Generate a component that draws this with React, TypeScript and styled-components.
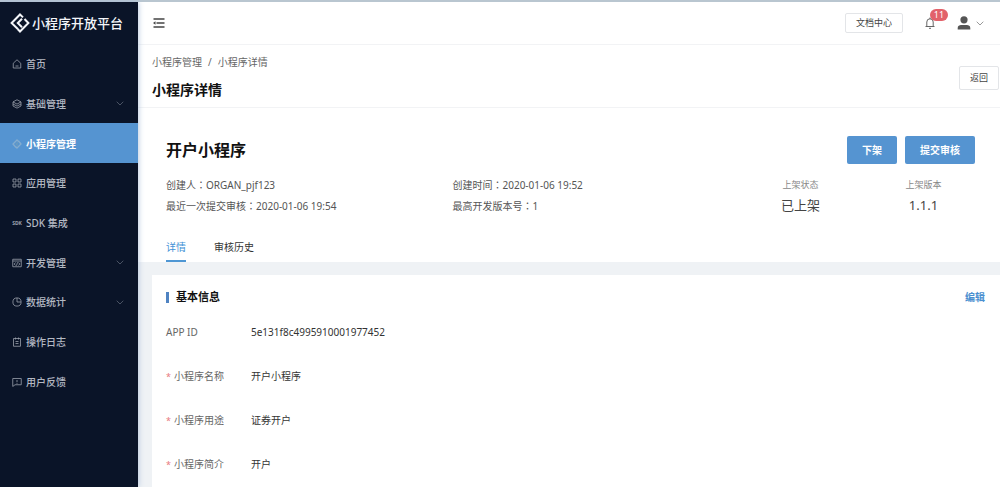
import React from "react";
import styled, { createGlobalStyle } from "styled-components";

const GlobalStyle = createGlobalStyle`
  *, *::before, *::after { box-sizing: border-box; }
  body {
    margin: 0;
    background: #eff2f5;
    color: #444;
    font-family: "Noto Sans", "Noto Sans CJK SC", sans-serif;
    font-size: 10px;
    line-height: 20px;
  }
  button { font: inherit; cursor: pointer; }
  a { color: inherit; text-decoration: none; }
  h1, h2, h3, p, dl, dd, ol, ul { margin: 0; padding: 0; }
`;

const Page = styled.div`
  display: flex;
  min-height: 100vh;
  border-top: 2px solid #b9c6d0;
`;

const Sidebar = styled.aside`
  flex: 0 0 138px;
  background: #0a1428;
  color: #b4b9c3;
  box-shadow: 0 0 6px #a9bdd8;
  z-index: 1;
`;

const Brand = styled.a`
  display: flex;
  align-items: center;
  gap: 2px;
  height: 42px;
  padding-left: 10px;
  color: #f4f6fa;
  font-size: 13px;
  font-weight: 500;
  white-space: nowrap;
`;

const Menu = styled.nav`
  display: grid;
  grid-auto-rows: 1fr;
  height: 357px;
`;

const MenuItem = styled.a<{ $active?: boolean }>`
  display: flex;
  align-items: center;
  padding: 1px 14px 0 11px;
  background: ${(p) => (p.$active ? "#5594d1" : "transparent")};
  color: ${(p) => (p.$active ? "#fff" : "inherit")};
  font-weight: ${(p) => (p.$active ? 700 : 500)};
`;

const MenuIcon = styled.span`
  display: flex;
  justify-content: center;
  width: 12px;
  margin-right: 3px;
  opacity: 0.85;
`;

const MenuText = styled.span`
  flex: 1;
`;

const Main = styled.main`
  flex: 1;
  min-width: 0;
  display: flex;
  flex-direction: column;
`;

const Topbar = styled.header`
  display: flex;
  align-items: center;
  height: 43px;
  padding: 0 16px 0 15px;
  background: #fff;
  border-bottom: 1px solid #f2f3f5;
`;

const IconButton = styled.button`
  position: relative;
  display: flex;
  align-items: center;
  gap: 5px;
  padding: 0;
  border: 0;
  background: none;
  color: #555;
`;

const Tools = styled.div`
  display: flex;
  align-items: center;
  margin-left: auto;
  gap: 22px;
`;

const PlainButton = styled.button<{ $tall?: boolean }>`
  height: ${(p) => (p.$tall ? 24 : 20)}px;
  padding: 0 10px;
  border: 1px solid #e3e5e8;
  border-radius: 2px;
  background: #fff;
  color: #444;
  font-size: 9px;
  line-height: 16px;
`;

const Badge = styled.span`
  position: absolute;
  top: -8px;
  left: 5px;
  width: 18px;
  border-radius: 6px;
  background: #e2626a;
  color: #fff;
  font-size: 9px;
  line-height: 12px;
  text-align: center;
`;

const PageHead = styled.section`
  display: flex;
  justify-content: space-between;
  height: 63px;
  padding: 7px 1px 0 14px;
  background: #fff;
  border-bottom: 1px solid #f2f3f5;
`;

const Crumbs = styled.ol`
  display: flex;
  gap: 6px;
  list-style: none;
  color: #666;
`;

const PageTitle = styled.h1`
  margin-top: 8px;
  color: #111;
  font-size: 14px;
  line-height: 20px;
`;

const BackSlot = styled.div`
  padding-top: 14px;
`;

const Summary = styled.section`
  padding: 28px 25px 0 28px;
  background: #fff;
`;

const SummaryHead = styled.div`
  display: flex;
  align-items: center;
  justify-content: space-between;
`;

const AppName = styled.h2`
  padding-top: 1px;
  color: #111;
  font-size: 16px;
  line-height: 27px;
`;

const Actions = styled.div`
  display: flex;
  gap: 8px;
`;

const PrimaryButton = styled.button`
  height: 28px;
  padding: 0 15px;
  border: 0;
  border-radius: 2px;
  background: #5594d1;
  color: #fff;
  font-weight: 700;
`;

const SummaryBody = styled.div`
  display: flex;
  padding: 11px 32px 0 0;
`;

const Meta = styled.div`
  flex: 1;
  display: grid;
  grid-template-columns: 1fr 1fr;
  align-content: start;
  row-gap: 1px;
  margin-right: 42px;
  color: #555;
`;

const Colon = styled.span`
  font-family: "Noto Sans CJK TC", sans-serif;
`;

const Stats = styled.dl`
  display: flex;
  gap: 84px;
`;

const Stat = styled.div`
  min-width: 39px;
  text-align: center;
`;

const StatLabel = styled.dt`
  color: #888;
  font-size: 9px;
  white-space: nowrap;
`;

const StatValue = styled.dd`
  color: #444;
  font-size: 13px;
`;

const Tabs = styled.div`
  display: flex;
  gap: 28px;
  margin-top: 18px;
`;

const Tab = styled.button<{ $active?: boolean }>`
  height: 28px;
  padding: 0;
  border: 0;
  border-bottom: 2px solid ${(p) => (p.$active ? "#4f97d4" : "transparent")};
  background: none;
  color: ${(p) => (p.$active ? "#3f91d6" : "#333")};
`;

const Card = styled.section`
  flex: 1;
  margin: 13px 0 0 14px;
  padding: 12px 15px 0 14px;
  background: #fff;
`;

const CardHead = styled.div`
  display: flex;
  align-items: center;
  justify-content: space-between;
`;

const CardTitle = styled.h3`
  display: flex;
  align-items: center;
  gap: 7px;
  color: #111;
  font-size: 11px;
  line-height: 20px;

  &::before {
    content: "";
    width: 3px;
    height: 11px;
    background: #4f83c2;
  }
`;

const EditLink = styled.a`
  color: #4a8fd0;
  font-weight: 700;
`;

const Fields = styled.dl`
  padding-top: 3px;
`;

const Field = styled.div`
  display: flex;
  align-items: center;
  height: 44px;
`;

const FieldLabel = styled.dt<{ $required?: boolean }>`
  flex: 0 0 85px;
  color: #666;

  &::before {
    content: ${(p) => (p.$required ? '"*"' : "none")};
    margin-right: 3px;
    color: #e8777d;
    font-size: 9px;
  }
`;

const FieldValue = styled.dd`
  color: #333;
`;

const Svg = ({ size = 10, children }: { size?: number; children: React.ReactNode }) => (
  <svg width={size} height={size} viewBox="0 0 20 20" fill="none" stroke="currentColor" strokeWidth="1.6" aria-hidden="true">
    {children}
  </svg>
);

const Chevron = ({ color }: { color: string }) => (
  <svg width="8" height="5" viewBox="0 0 8 5" fill="none" stroke={color} aria-hidden="true">
    <path d="M.7.7 4 4 7.3.7" />
  </svg>
);

const Logo = () => (
  <svg width="20" height="20" viewBox="0 0 20 20" fill="none" stroke="currentColor" strokeWidth="2" aria-hidden="true">
    <path d="M7.8 16 1.600 10 10 1.500l3 2.900" />
    <path d="M14.500 6 18.400 10 10 18.500 7.600 16" />
    <path d="M12 5.800 7.800 10l4.200 4.200" />
  </svg>
);

const icons = {
  home: (
    <Svg>
      <path d="M2.500 8.500 10 1.500l7.500 7V18h-15zM7 14h6" />
    </Svg>
  ),
  layers: (
    <Svg>
      <path d="m10 1.500 8 4.300-8 4.400-8-4.400zM2 10l8 4.300 8-4.300M2 14l8 4.300 8-4.300M2 6v8M18 6v8" />
    </Svg>
  ),
  program: (
    <svg width="10" height="10" viewBox="0 0 20 20" fill="none" stroke="#8db1cf" strokeWidth="2.6" aria-hidden="true">
      <path d="M8 17 2 10l8-8 3 3M13 4l5 6-8 8-3-3" />
      <path d="M12 6.500 8.500 10l3.500 3.500" stroke="#6d9dbd" />
    </svg>
  ),
  apps: (
    <Svg>
      <path d="M2 2h6v6H2zM12 2h6v6h-6zM2 12h6v6H2zM12 12h6v6h-6z" />
    </Svg>
  ),
  code: (
    <Svg>
      <path d="M1.500 2.500h17v15h-17zM1.500 6h17M7 9l-2.500 3L7 15M13 9l2.500 3-2.500 3M11 8.500 9 15.500" />
    </Svg>
  ),
  pie: (
    <Svg>
      <circle cx="10" cy="10" r="8.200" />
      <path d="M10 2v8h8" />
    </Svg>
  ),
  log: (
    <Svg>
      <path d="M3 3h14v15.500H3zM7 1v4M13 1v4M7 9h6M7 13h6" />
    </Svg>
  ),
  feedback: (
    <Svg>
      <path d="M1.500 3h17v12.500H6L1.500 19zM10 6v4M10 11.500v2" />
    </Svg>
  ),
};

const SdkMark = styled.span`
  font-size: 5px;
  font-weight: 700;
  line-height: 8px;
`;

const menu = [
  { text: "首页", icon: icons.home },
  { text: "基础管理", icon: icons.layers, sub: true },
  { text: "小程序管理", icon: icons.program, active: true },
  { text: "应用管理", icon: icons.apps },
  { text: "SDK 集成", icon: <SdkMark>SDK</SdkMark> },
  { text: "开发管理", icon: icons.code, sub: true },
  { text: "数据统计", icon: icons.pie, sub: true },
  { text: "操作日志", icon: icons.log },
  { text: "用户反馈", icon: icons.feedback },
];

const meta = [
  ["创建人", "ORGAN_pjf123"],
  ["创建时间", "2020-01-06 19:52"],
  ["最近一次提交审核", "2020-01-06 19:54"],
  ["最高开发版本号", "1"],
];

const fields = [
  { label: "APP ID", value: "5e131f8c4995910001977452" },
  { label: "小程序名称", value: "开户小程序", required: true },
  { label: "小程序用途", value: "证券开户", required: true },
  { label: "小程序简介", value: "开户", required: true },
];

export default function App() {
  return (
    <>
      <GlobalStyle />
      <Page lang="zh-CN">
        <Sidebar>
          <Brand href="#">
            <Logo />
            小程序开放平台
          </Brand>
          <Menu>
            {menu.map((m) => (
              <MenuItem key={m.text} href="#" $active={m.active} aria-current={m.active ? "page" : undefined}>
                <MenuIcon>{m.icon}</MenuIcon>
                <MenuText>{m.text}</MenuText>
                {m.sub && <Chevron color="#4a5364" />}
              </MenuItem>
            ))}
          </Menu>
        </Sidebar>
        <Main>
          <Topbar>
            <IconButton aria-label="收起菜单">
              <svg width="12" height="10" viewBox="0 0 12 10" fill="none" stroke="#444" strokeWidth="1.4" aria-hidden="true">
                <path d="M.5 1h11M3.500 5h8M.5 9h11" />
                <path d="M0 5 2.500 3.300v3.400z" fill="#444" stroke="none" />
              </svg>
            </IconButton>
            <Tools>
              <PlainButton>文档中心</PlainButton>
              <IconButton aria-label="通知">
                <svg width="10" height="12" viewBox="0 0 10 12" fill="none" stroke="#666" aria-hidden="true">
                  <path d="M.5 9.500h9M1.800 9.500V5a3.200 3.200 0 0 1 6.400 0v4.500M4 11.300h2M5 .5v1.500" />
                </svg>
                <Badge>11</Badge>
              </IconButton>
              <IconButton aria-label="账户">
                <svg width="14" height="14" viewBox="0 0 14 14" fill="#555" aria-hidden="true">
                  <circle cx="7" cy="3.800" r="3.600" />
                  <path d="M.7 13.500v-1.500C.7 9.800 2.500 9 4 9h6c1.500 0 3.300.8 3.300 3v1.500z" />
                </svg>
                <Chevron color="#999" />
              </IconButton>
            </Tools>
          </Topbar>
          <PageHead>
            <div>
              <Crumbs>
                <li>
                  <a href="#">小程序管理</a>
                </li>
                <li aria-hidden="true">/</li>
                <li>小程序详情</li>
              </Crumbs>
              <PageTitle>小程序详情</PageTitle>
            </div>
            <BackSlot>
              <PlainButton $tall>返回</PlainButton>
            </BackSlot>
          </PageHead>
          <Summary>
            <SummaryHead>
              <AppName>开户小程序</AppName>
              <Actions>
                <PrimaryButton>下架</PrimaryButton>
                <PrimaryButton>提交审核</PrimaryButton>
              </Actions>
            </SummaryHead>
            <SummaryBody>
              <Meta>
                {meta.map(([k, v]) => (
                  <p key={k}>
                    {k}
                    <Colon lang="zh-TW">：</Colon>
                    {v}
                  </p>
                ))}
              </Meta>
              <Stats>
                <Stat>
                  <StatLabel>上架状态</StatLabel>
                  <StatValue>已上架</StatValue>
                </Stat>
                <Stat>
                  <StatLabel>上架版本</StatLabel>
                  <StatValue>1.1.1</StatValue>
                </Stat>
              </Stats>
            </SummaryBody>
            <Tabs role="tablist">
              <Tab role="tab" aria-selected="true" $active>
                详情
              </Tab>
              <Tab role="tab" aria-selected="false">
                审核历史
              </Tab>
            </Tabs>
          </Summary>
          <Card>
            <CardHead>
              <CardTitle>基本信息</CardTitle>
              <EditLink href="#">编辑</EditLink>
            </CardHead>
            <Fields>
              {fields.map((f) => (
                <Field key={f.label}>
                  <FieldLabel $required={f.required}>{f.label}</FieldLabel>
                  <FieldValue>{f.value}</FieldValue>
                </Field>
              ))}
            </Fields>
          </Card>
        </Main>
      </Page>
    </>
  );
}
